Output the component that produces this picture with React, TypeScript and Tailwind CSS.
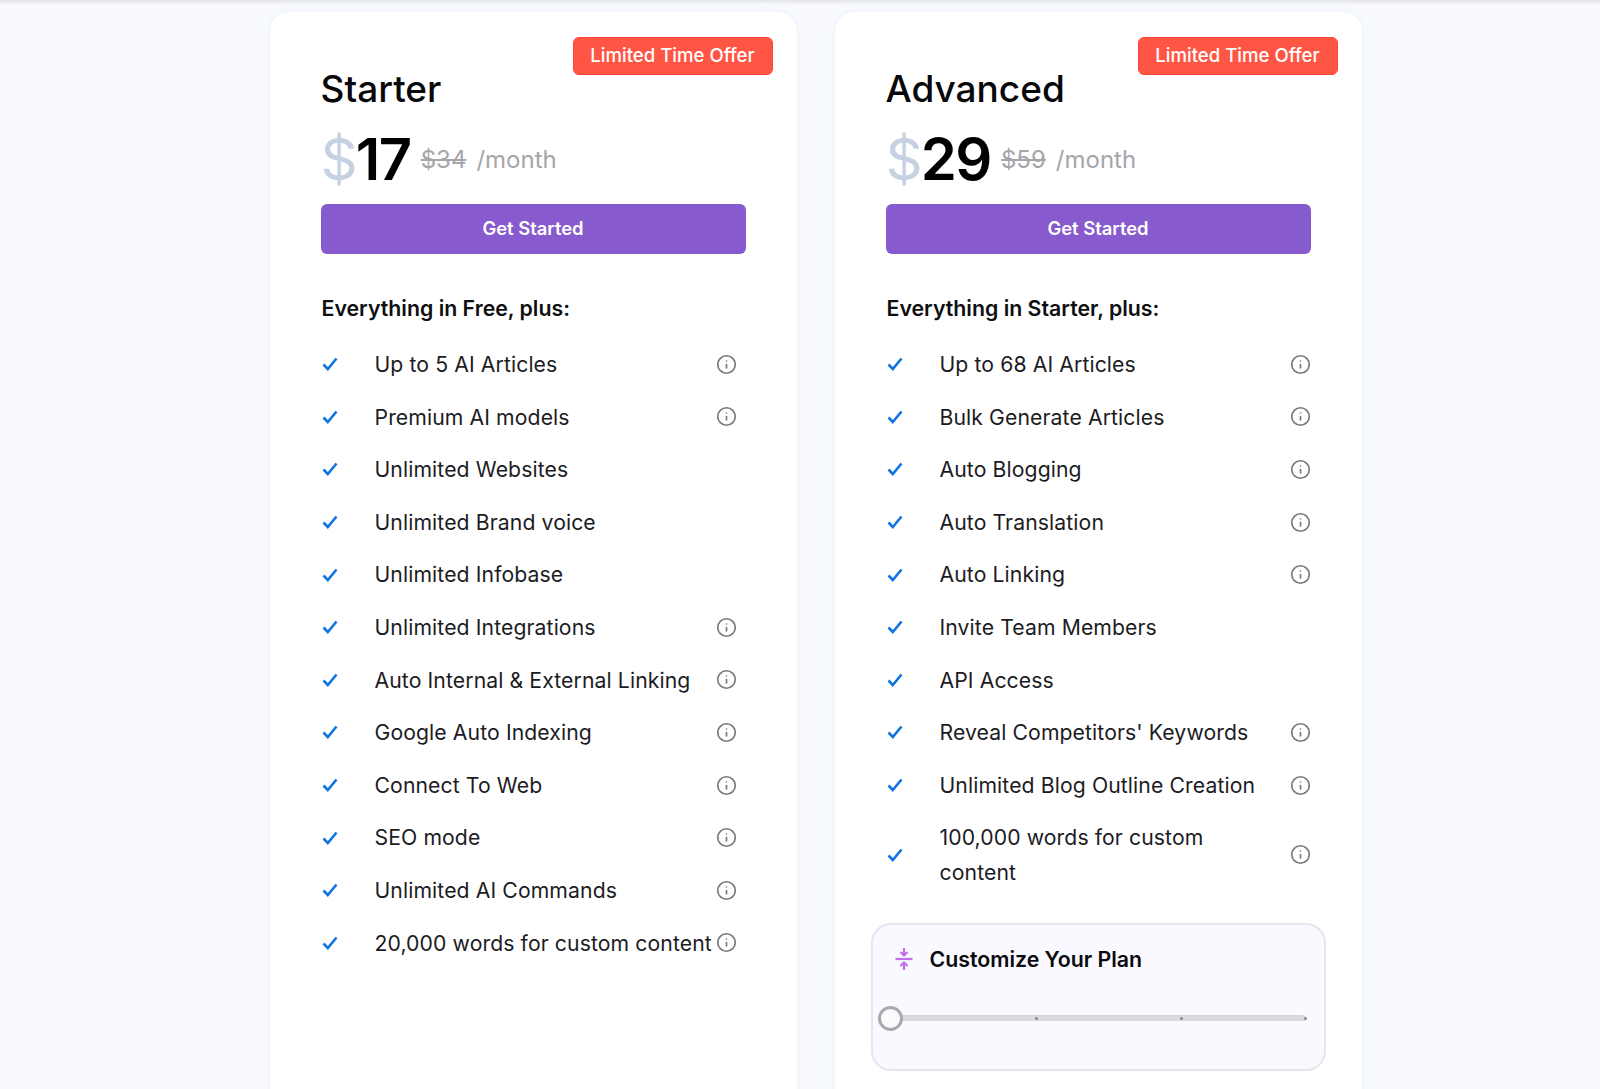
import { Info } from 'lucide-react'

type Feature = {
  label: string
  info?: boolean
}

type Plan = {
  name: string
  price: string
  was: string
  intro: string
  textClass: string
  features: Feature[]
  customize?: boolean
}

const plans: Plan[] = [
  {
    name: 'Starter',
    price: '17',
    was: '$34',
    intro: 'Everything in Free, plus:',
    textClass: 'w-[341px]',
    features: [
      { label: 'Up to 5 AI Articles', info: true },
      { label: 'Premium AI models', info: true },
      { label: 'Unlimited Websites' },
      { label: 'Unlimited Brand voice' },
      { label: 'Unlimited Infobase' },
      { label: 'Unlimited Integrations', info: true },
      { label: 'Auto Internal & External Linking', info: true },
      { label: 'Google Auto Indexing', info: true },
      { label: 'Connect To Web', info: true },
      { label: 'SEO mode', info: true },
      { label: 'Unlimited AI Commands', info: true },
      { label: '20,000 words for custom content', info: true },
    ],
  },
  {
    name: 'Advanced',
    price: '29',
    was: '$59',
    intro: 'Everything in Starter, plus:',
    textClass: 'w-[330px] mr-[20px]',
    customize: true,
    features: [
      { label: 'Up to 68 AI Articles', info: true },
      { label: 'Bulk Generate Articles', info: true },
      { label: 'Auto Blogging', info: true },
      { label: 'Auto Translation', info: true },
      { label: 'Auto Linking', info: true },
      { label: 'Invite Team Members' },
      { label: 'API Access' },
      { label: "Reveal Competitors' Keywords", info: true },
      { label: 'Unlimited Blog Outline Creation', info: true },
      { label: '100,000 words for custom content', info: true },
    ],
  },
]

const CheckMark = () => (
  <svg viewBox="0 0 16 14" className="h-[14px] w-[16px] shrink-0" fill="none">
    <path d="M1.5 7.5 L5.8 12 L14.5 1.5" stroke="#0f74e0" strokeWidth="2.6" />
  </svg>
)

const FeatureRow = ({ feature, textClass }: { feature: Feature; textClass: string }) => (
  <li className="flex items-center py-[9px]">
    <span className="flex w-[53px] shrink-0 items-center">
      <CheckMark />
    </span>
    <span className={`${textClass} shrink-0 text-[21.2px] leading-[34.6px] tracking-[0.1px] text-[#1c1c1f]`}>
      {feature.label}
    </span>
    {feature.info ? <Info className="h-[21px] w-[21px] shrink-0 text-[#77777c]" strokeWidth={1.9} /> : null}
  </li>
)

const CustomizeBox = () => (
  <div className="ml-[-16px] mr-[-14px] mt-[24px] h-[148px] rounded-[20px] border-2 border-[#e7e6ee] bg-[#faf9ff] px-[20px] pt-[18px]">
    <div className="flex items-center gap-[17px]">
      <svg viewBox="0 0 18 24" className="ml-[2px] h-[24px] w-[18px]" fill="none" stroke="#c06fe8" strokeWidth="2.2">
        <path d="M0.5 12 H17.5" />
        <path d="M9 1 V8 M5.5 5 L9 8.5 L12.5 5" />
        <path d="M9 23 V16 M5.5 19 L9 15.5 L12.5 19" />
      </svg>
      <span className="text-[21.3px] font-semibold leading-[32px] text-[#0b0b0f]">Customize Your Plan</span>
    </div>
    <div className="relative mt-[40px] ml-[-12px] mr-[-2px] h-[6px] rounded-full bg-[#d9d8de]">
      <span className="absolute left-[154px] top-[2px] h-[3px] w-[3px] rounded-full bg-[#85858a]" />
      <span className="absolute left-[299px] top-[2px] h-[3px] w-[3px] rounded-full bg-[#85858a]" />
      <span className="absolute right-[-1px] top-[2px] h-[3px] w-[3px] rounded-full bg-[#85858a]" />
      <span className="absolute left-[-3px] top-[-9px] h-[25px] w-[25px] rounded-full border-[3px] border-[#a9a9ad] bg-[#fbfbfe]" />
    </div>
  </div>
)

const PlanCard = ({ plan }: { plan: Plan }) => (
  <section className="relative h-[1140px] w-[527px] rounded-[20px] bg-white pl-[52px] pr-[50px] pt-[56px] shadow-[0_0_6px_rgba(200,210,235,0.25)]">
    <span className="absolute right-[24px] top-[25px] flex h-[38px] w-[200px] items-center justify-center rounded-[6px] border border-[#ff4433] bg-[#ff5545] text-[18.6px] font-medium text-white">
      Limited Time Offer
    </span>
    <h2 className="ml-[-1px] text-[37px] font-medium leading-[42px] text-[#08080a]">{plan.name}</h2>
    <div className="ml-[-1px] mt-[16px] flex h-[64px] items-center">
      <span className="mt-[2px] text-[58px] font-normal leading-none text-[#c6d1e2]">$</span>
      <span className="ml-[-2px] mt-[1px] text-[58px] font-semibold leading-none tracking-[-1.5px] text-black">{plan.price}</span>
      <span className="ml-[10px] mt-[4px] text-[24px] text-[#a5a5aa] line-through">{plan.was}</span>
      <span className="ml-[10px] mt-[4px] text-[24px] text-[#a5a5aa]">/month</span>
    </div>
    <button className="ml-[-1px] mt-[14px] flex h-[50px] w-[425px] items-center justify-center rounded-[6px] bg-[#875bcd] text-[18.4px] font-semibold text-white">
      Get Started
    </button>
    <p className="mt-[38px] text-[21.3px] font-semibold leading-[32px] text-[#0f0f12]">{plan.intro}</p>
    <ul className="mt-[14px] w-[425px]">
      {plan.features.map((feature) => (
        <FeatureRow key={feature.label} feature={feature} textClass={plan.textClass} />
      ))}
    </ul>
    {plan.customize ? <CustomizeBox /> : null}
  </section>
)

const App = () => {
  return (
    <div
      className="h-[1089px] w-[1600px] overflow-hidden bg-[#f8faff]"
      style={{ fontFamily: 'Inter, "Liberation Sans", sans-serif' }}
    >
      <div className="h-[4px] bg-gradient-to-b from-[#e2e4e9] to-[#f5f7fc]" />
      <div className="flex justify-center gap-[38px] pl-[31px] pt-[8px]">
        {plans.map((plan) => (
          <PlanCard key={plan.name} plan={plan} />
        ))}
      </div>
    </div>
  )
}

export default App
